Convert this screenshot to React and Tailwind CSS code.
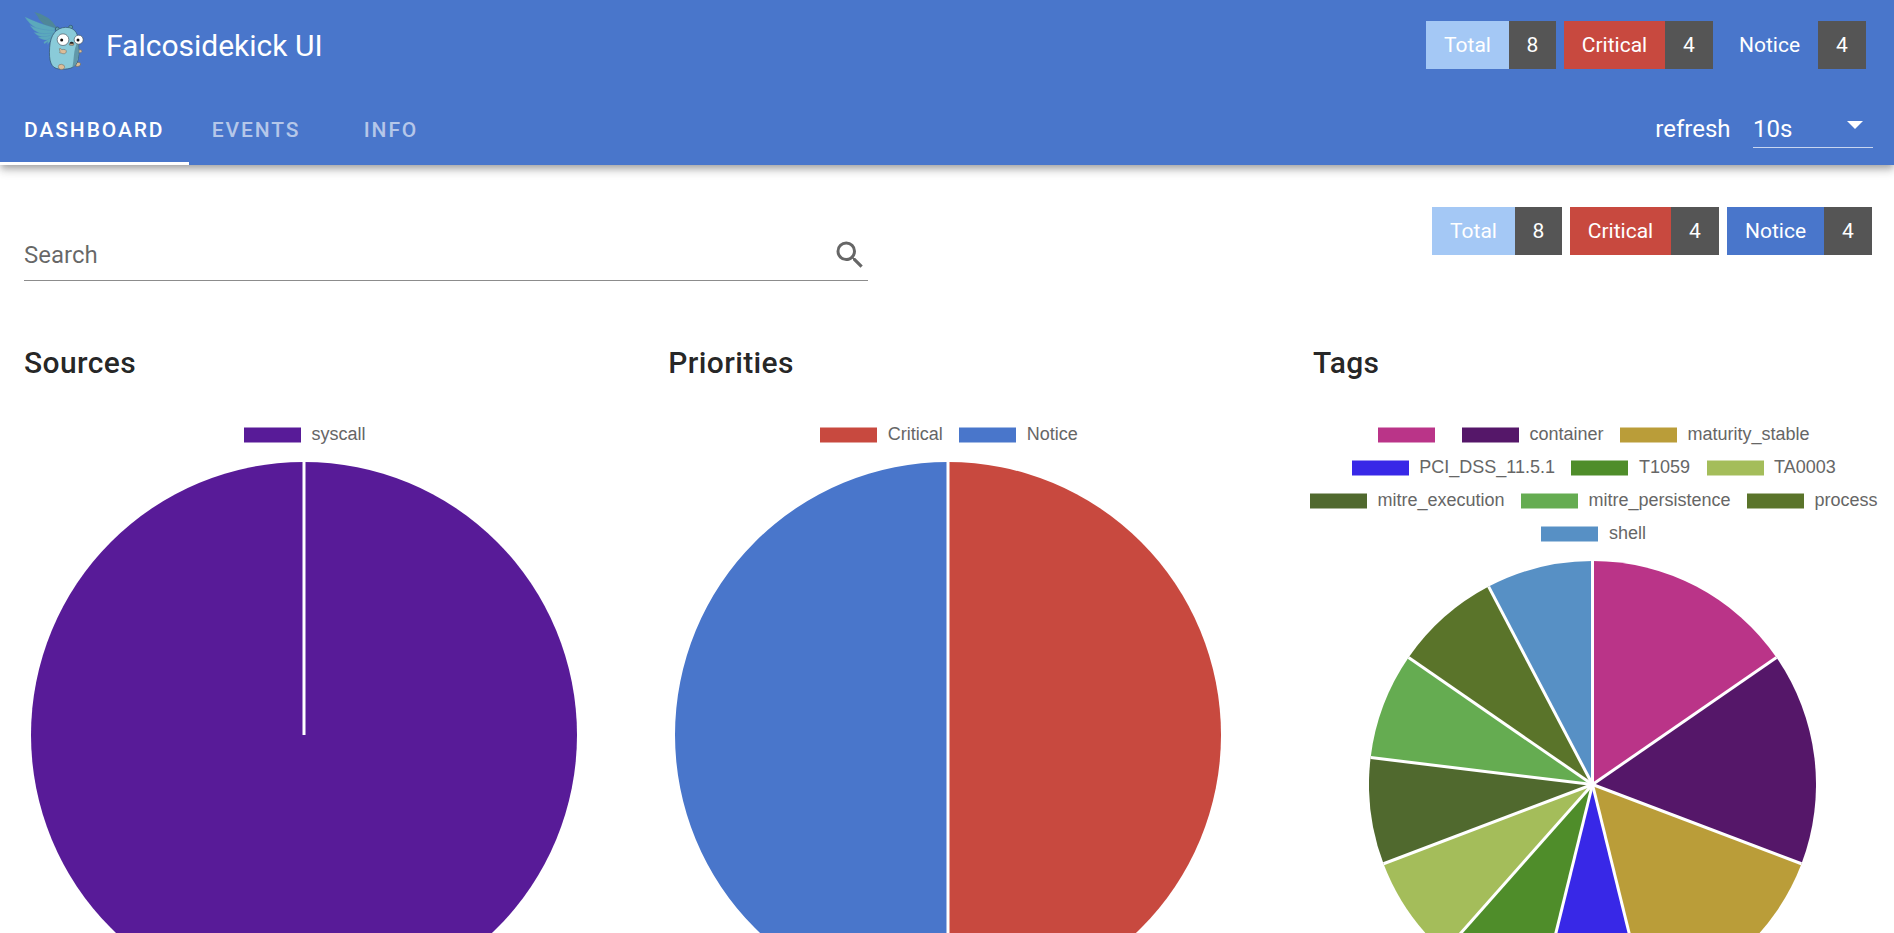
import React from "react";

const SOURCES = [[{ label: "syscall", value: 1, color: "#581b98" }]];

const PRIORITIES = [
  [
    { label: "Critical", value: 1, color: "#c8493f" },
    { label: "Notice", value: 1, color: "#4976cb" },
  ],
];

const TAGS = [
  [
    { label: "", value: 2, color: "#ba3488" },
    { label: "container", value: 2, color: "#551769" },
    { label: "maturity_stable", value: 2, color: "#ba9d39" },
  ],
  [
    { label: "PCI_DSS_11.5.1", value: 1, color: "#3828e7" },
    { label: "T1059", value: 1, color: "#4f8d2a" },
    { label: "TA0003", value: 1, color: "#a4bd5a" },
  ],
  [
    { label: "mitre_execution", value: 1, color: "#50692e" },
    { label: "mitre_persistence", value: 1, color: "#65ac51" },
    { label: "process", value: 1, color: "#5a742a" },
  ],
  [{ label: "shell", value: 1, color: "#5790c5" }],
];

function Logo() {
  return (
    <svg className="h-[70px] w-20 shrink-0" viewBox="0 0 240 210" fill="none">
      <g fill="#4f8799">
        <path d="M58 12 Q104 22 126 60 L120 68 Q84 50 58 12Z" />
        <path d="M68 28 Q96 34 120 60 L112 72 Q86 54 68 28Z" />
      </g>
      <g fill="#5ba9bc" stroke="#4b80c4" strokeWidth="0.8">
        <path d="M29 26 Q66 44 120 60 L118 75 Q56 72 29 26Z" />
        <path d="M44 52 Q78 68 120 67 L116 81 Q64 84 44 52Z" />
        <path d="M56 73 Q90 80 118 75 L112 87 Q76 94 56 73Z" />
        <path d="M68 86 Q94 88 115 80 L108 95 Q84 100 68 86Z" />
        <path d="M86 102 Q100 94 112 86 L106 100 L97 110 L98 101 L88 108Z" />
      </g>
      <ellipse cx="127" cy="63" rx="6" ry="6" fill="#5fa0ad" stroke="#33566f" strokeWidth="2.2" />
      <ellipse cx="167" cy="57" rx="6" ry="5" fill="#5fa0ad" stroke="#33566f" strokeWidth="2.2" />
      <g fill="#dcbd98" stroke="#6d6960" strokeWidth="2">
        <path d="M187 126 Q200 122 201 130 Q199 137 188 134Z" />
        <path d="M184 164 Q196 160 197 168 Q196 177 182 175Z" />
      </g>
      <path
        d="M104 118 C106 80 124 59 152 58 C184 58 191 82 191 110 C191 132 193 148 187 162 C178 182 158 185 132 183 C108 181 101 160 104 118Z"
        fill="#8acbd9"
        stroke="#33566f"
        strokeWidth="2.2"
      />
      <path d="M188 102 C191 132 192 148 186 161 C182 170 177 175 172 178 C178 156 174 126 188 102Z" fill="#6198a9" />
      <circle cx="144" cy="95" r="17.5" fill="#fff" stroke="#46535e" strokeWidth="2" />
      <circle cx="191" cy="95" r="13.5" fill="#fff" stroke="#46535e" strokeWidth="2" />
      <circle cx="140" cy="96" r="4.5" fill="#111" />
      <circle cx="189" cy="96" r="4.5" fill="#111" />
      <path d="M163 107 Q170 99 177 107 Q178 113 170 112 L163 111Z" fill="#c9a989" stroke="#4e4640" strokeWidth="1.5" />
      <path d="M164 104 Q170 99 176 104 L174 107 L166 107Z" fill="#252525" />
      <path d="M133 122 Q138 120 140 125 Q155 122 154 132 Q150 141 138 135 Q131 136 135 130Z" fill="#dcbd98" stroke="#6d6960" strokeWidth="1.6" />
      <path d="M130 176 Q130 168 140 169 Q150 171 149 178 Q146 187 136 184 Q130 182 130 176Z" fill="#dcbd98" stroke="#6d6960" strokeWidth="1.6" />
    </svg>
  );
}

function Badge({ label, count, tone, size, countSize }) {
  return (
    <div className="flex h-12 text-[21px] leading-[30px] text-white">
      <span className={`flex items-center justify-center ${size} ${tone}`}>{label}</span>
      <span className={`flex items-center justify-center bg-[#555555] ${countSize}`}>{count}</span>
    </div>
  );
}

function Badges() {
  return (
    <div className="flex gap-2">
      <Badge label="Total" count="8" tone="bg-[#a4c8f5]" size="w-[83px]" countSize="w-[47px]" />
      <Badge label="Critical" count="4" tone="bg-[#c8493f]" size="w-[101px]" countSize="w-12" />
      <Badge label="Notice" count="4" tone="bg-[#4976cb]" size="w-[97px]" countSize="w-12" />
    </div>
  );
}

function Tab({ label, active }) {
  return (
    <div className={`flex h-full min-w-[135px] flex-col items-center pt-[22px] text-[21px] leading-[31px] font-medium tracking-[0.0893em] ${active ? "w-[188.5px] text-white" : "text-white/60"}`}>
      {label}
      {active && <span className="mt-auto h-[3px] w-full bg-white" />}
    </div>
  );
}

function Header() {
  return (
    <header className="relative h-[165px] bg-[#4976cb] text-white shadow-[0_3px_6px_-1.5px_rgba(0,0,0,0.2),0_6px_7.5px_0_rgba(0,0,0,0.14),0_1.5px_15px_0_rgba(0,0,0,0.12)]">
      <div className="flex h-[93px] items-start justify-between pr-7 pl-[15px]">
        <div className="flex items-center gap-[11px] pt-2">
          <Logo />
          <h1 className="pt-1 text-[30px] leading-[45px]">Falcosidekick UI</h1>
        </div>
        <div className="pt-[21px]">
          <Badges />
        </div>
      </div>
      <div className="flex h-[72px] items-stretch justify-between pr-[21px]">
        <nav className="flex">
          <Tab label="DASHBOARD" active />
          <Tab label="EVENTS" />
          <Tab label="INFO" />
        </nav>
        <div className="flex items-start gap-[22.5px] pt-[18px] text-2xl leading-9">
          <span>refresh</span>
          <div className="flex h-[37px] w-[120px] items-start justify-between border-b border-white/70 pr-[10px]">
            <span>10s</span>
            <svg className="mt-[10px] h-2 w-4" viewBox="0 0 16 8" fill="#fff">
              <path d="M0 0h16L8 8z" />
            </svg>
          </div>
        </div>
      </div>
    </header>
  );
}

function Legend({ rows }) {
  return (
    <div className="flex flex-col items-center gap-[15px] font-['Liberation_Sans',Arial,sans-serif] text-lg leading-[18px] text-[#666666]">
      {rows.map((row, r) => (
        <div key={r} className="flex h-[18px] items-center gap-[15px] whitespace-nowrap">
          {row.map((item, i) => (
            <div key={i} className="flex items-center gap-[10.5px] pl-[1.5px]">
              <span className="h-4 w-[57px] border-y border-white/50" style={{ backgroundColor: item.color }} />
              <span className="pb-0.5">{item.label}</span>
            </div>
          ))}
        </div>
      ))}
    </div>
  );
}

function Pie({ slices, radius }) {
  const total = slices.reduce((sum, s) => sum + s.value, 0);
  const point = (v) => {
    const a = (v / total) * Math.PI * 2;
    return [radius * Math.sin(a), -radius * Math.cos(a)];
  };
  let start = 0;
  const parts = slices.map((s) => {
    const part = { color: s.color, from: start, to: start + s.value };
    start += s.value;
    return part;
  });
  return (
    <svg
      className="block shrink-0"
      width={radius * 2}
      height={radius * 2}
      viewBox={`${-radius} ${-radius} ${radius * 2} ${radius * 2}`}
    >
      {parts.length === 1 && <circle r={radius} fill={parts[0].color} />}
      {parts.length > 1 &&
        parts.map((p) => {
          const [x1, y1] = point(p.from);
          const [x2, y2] = point(p.to);
          return (
            <path
              key={p.from}
              fill={p.color}
              d={`M0 0L${x1} ${y1}A${radius} ${radius} 0 0 1 ${x2} ${y2}Z`}
            />
          );
        })}
      {parts.map((p) => {
        const [x, y] = point(p.from);
        return <line key={p.from} x1="0" y1="0" x2={x} y2={y} stroke="#fff" strokeWidth="3" />;
      })}
    </svg>
  );
}

function ChartCard({ title, rows, radius }) {
  return (
    <section className="flex w-[560px] flex-col">
      <h2 className="text-[30px] leading-[48px] font-medium tracking-[0.0125em] text-black/87">{title}</h2>
      <div className="flex flex-col items-center gap-[18px] pt-[39px]">
        <Legend rows={rows} />
        <Pie slices={rows.flat()} radius={radius} />
      </div>
    </section>
  );
}

export default function App() {
  return (
    <div className="h-[933px] w-[1894px] overflow-hidden bg-white font-['Roboto',sans-serif]">
      <Header />
      <main>
        <div className="flex h-[174px] items-start justify-between pr-[22px] pl-6">
          <div className="mt-[68px] flex h-12 w-[844px] items-start justify-between border-b border-black/45 text-black/60">
            <span className="pt-1 text-2xl leading-9">Search</span>
            <svg className="mt-[3.5px] size-9" viewBox="0 0 24 24" fill="currentColor">
              <path d="M9.5,3A6.5,6.5 0 0,1 16,9.5C16,11.11 15.41,12.59 14.44,13.73L14.71,14H15.5L20.5,19L19,20.5L14,15.5V14.71L13.73,14.44C12.59,15.41 11.11,16 9.5,16A6.5,6.5 0 0,1 3,9.5A6.5,6.5 0 0,1 9.5,3M9.5,5C7,5 5,7 5,9.5C5,12 7,14 9.5,14C12,14 14,12 14,9.5C14,7 12,5 9.5,5Z" />
            </svg>
          </div>
          <div className="pt-[42px]">
            <Badges />
          </div>
        </div>
        <div className="grid grid-cols-[644.3px_644.7px_560px] pl-6">
          <ChartCard title="Sources" rows={SOURCES} radius={273} />
          <ChartCard title="Priorities" rows={PRIORITIES} radius={273} />
          <ChartCard title="Tags" rows={TAGS} radius={223.5} />
        </div>
      </main>
    </div>
  );
}
